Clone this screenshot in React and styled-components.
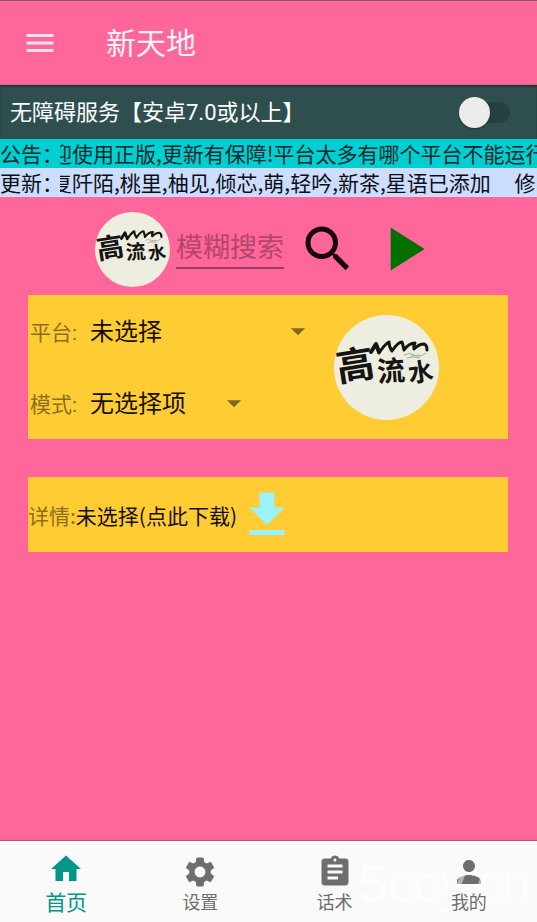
import styled, { createGlobalStyle } from 'styled-components';
import {
	MdMenu,
	MdSearch,
	MdPlayArrow,
	MdGetApp,
	MdHome,
	MdSettings,
	MdAssignment,
	MdPerson,
	MdArrowDropDown,
} from 'react-icons/md';

const GlobalStyle = createGlobalStyle`
	* {
		box-sizing: border-box;
	}
	body {
		margin: 0;
		background: #ff6699;
	}
	body, button, input, select {
		font-family: Roboto, 'Noto Sans CJK SC', sans-serif;
	}
`;

const Container = styled.div`
	min-height: 100vh;
	display: flex;
	flex-direction: column;
	overflow: hidden;
	background: #ff6699;
`;

const IconButton = styled.button`
	display: flex;
	padding: 0;
	border: 0;
	background: none;
	color: ${(props) => props.$color};
	font-size: ${(props) => props.$size}px;
	cursor: pointer;
`;

const Header = styled.header`
	height: 85px;
	padding: 0 22px;
	display: flex;
	align-items: center;
	gap: 48px;
	border-top: 1px solid #80597c;
	border-bottom: 1px solid #c96387;
`;

const Title = styled.h1`
	margin: 0;
	padding-bottom: 4px;
	font-size: 30px;
	font-weight: 400;
	color: #fff3f8;
`;

const ServiceBar = styled.label`
	height: 54px;
	padding: 0 27px 0 10px;
	display: flex;
	align-items: center;
	justify-content: space-between;
	background: #2f4f4f;
	box-shadow: inset 0 2px 2px rgba(0, 0, 0, 0.3);
	color: white;
	font-size: 22px;
`;

const ServiceName = styled.span`
	padding-bottom: 4px;
`;

const Switch = styled.input`
	appearance: none;
	width: 43px;
	height: 21px;
	margin: 0;
	display: flex;
	align-items: center;
	border-radius: 11px;
	background: #263f41;
	cursor: pointer;

	&::before {
		content: '';
		flex: none;
		width: 31px;
		height: 31px;
		margin-left: -8px;
		border-radius: 50%;
		background: #ececec;
		box-shadow: 0 1px 2px rgba(0, 0, 0, 0.4);
	}

	&:checked::before {
		margin-left: 20px;
	}
`;

const Notice = styled.div`
	height: 29px;
	display: flex;
	align-items: center;
	background: ${(props) => props.$background};
	color: ${(props) => props.$color};
	font-family: 'Noto Sans CJK SC', sans-serif;
	font-size: 21px;
	line-height: 29px;
	white-space: pre;
`;

const NoticeLabel = styled.span`
	flex: none;
	width: 60px;
	overflow: hidden;
`;

/* the ticker is stopped in the middle of its first character */
const Ticker = styled.span`
	flex: 1;
	min-width: 0;
	overflow: hidden;
	text-indent: -9px;
`;

const SearchForm = styled.form`
	height: 98px;
	padding: 6px 90px 0 95px;
	display: flex;
	align-items: center;
`;

const SearchInput = styled.input`
	flex: 1;
	min-width: 0;
	max-width: 108px;
	height: 44px;
	margin: 0 14px 4px 6px;
	padding: 4px 0 0;
	border: 0;
	border-bottom: 2px solid #993d63;
	outline: none;
	background: none;
	color: #222;
	font-size: 27px;

	&::placeholder {
		color: #b3476b;
		opacity: 1;
	}
`;

const SearchActions = styled.div`
	display: flex;
	align-items: center;
	gap: 8px;
`;

const Logo = styled.svg`
	flex: none;
	display: block;
	width: ${(props) => props.$size}px;
	height: ${(props) => props.$size}px;
`;

const Main = styled.main`
	margin: 0 29px 38px 28px;
	display: flex;
	flex-direction: column;
	gap: 38px;
`;

const Card = styled.section`
	display: flex;
	align-items: center;
	background: #ffcc33;
`;

const Fields = styled.div`
	width: 306px;
	padding-left: 2px;
`;

const Field = styled.div`
	height: 72px;
	display: flex;
	align-items: center;
`;

const FieldLabel = styled.label`
	width: 60px;
	color: #8a6e1c;
	font-size: 21px;
`;

const SelectBox = styled.div`
	width: ${(props) => props.$width}px;
	display: grid;
	align-items: center;

	> * {
		grid-area: 1 / 1;
	}

	svg {
		justify-self: end;
		color: #80661a;
		font-size: 34px;
		pointer-events: none;
	}
`;

const Select = styled.select`
	appearance: none;
	width: 100%;
	padding: 2px 0 0;
	border: 0;
	outline: none;
	background: none;
	color: #150f00;
	font-size: 24px;
`;

const DetailCard = styled(Card)`
	height: 75px;
	color: #8a6e1c;
	font-family: 'Noto Sans CJK SC', sans-serif;
	font-size: 21px;
`;

const DetailLink = styled.a`
	display: flex;
	align-items: center;
	color: #150f00;
	text-decoration: none;

	svg {
		color: #99f2ff;
		font-size: 60px;
	}
`;

const Nav = styled.nav`
	position: relative;
	height: 81px;
	margin-top: auto;
	display: grid;
	grid-template-columns: repeat(4, 1fr);
	border-top: 2px solid white;
	background: #fafafa;
	box-shadow: 0 -1px 1px rgba(0, 0, 0, 0.25);
`;

const NavItem = styled.a`
	padding: 0 2px 6px 0;
	display: flex;
	flex-direction: column;
	align-items: center;
	justify-content: flex-end;
	color: ${(props) => (props.$active ? '#009688' : '#6e6e6e')};
	font-size: ${(props) => (props.$active ? 21 : 18)}px;
	line-height: 26px;
	text-decoration: none;

	svg {
		margin-bottom: ${(props) => (props.$active ? 3 : 0)}px;
		font-size: 36px;
	}
`;

const NavLabel = styled.span`
	position: relative;
	z-index: 1;
`;

const Watermark = styled.span`
	position: absolute;
	right: 6px;
	bottom: 9px;
	color: rgba(255, 255, 255, 0.5);
	font-family: 'Liberation Sans', sans-serif;
	font-size: 52px;
	line-height: 60px;
	pointer-events: none;
`;

const BrandLogo = ({ size }) => (
	<Logo $size={size} viewBox="0 0 105 105" role="img" aria-label="高山流水">
		<circle cx="52.5" cy="52.5" r="52.5" fill="#eeeee0" />
		<g
			fill="#141412"
			fontFamily="'Noto Sans CJK SC', sans-serif"
			fontWeight="700"
		>
			<text x="2" y="64" fontSize="38" transform="rotate(-9 20 50)">
				高
			</text>
			<text x="43" y="66" fontSize="28" transform="rotate(-4 57 56)">
				流
			</text>
			<text x="74" y="66" fontSize="25" transform="rotate(-8 87 56)">
				水
			</text>
		</g>
		<g fill="none" stroke="#141412" strokeLinecap="round" strokeLinejoin="round">
			<path strokeWidth="4" d="M37 37 L42 29 L45 37" />
			<path
				strokeWidth="3"
				d="M45 38 Q51 29 55 27 Q55 32 58 36 Q64 27 68 27 Q69 30 70 35 Q75 28 81 28 Q79 31 80 34 Q85 29 90 29 Q93 30 93 35"
			/>
		</g>
		<path
			d="M70 40 q5 -3 10 0 t12 -2 M73 43 q6 -2 13 0 M77 41 l9 -1"
			fill="none"
			stroke="#aaa99f"
			strokeWidth="1"
		/>
	</Logo>
);

const navItems = [
	{ label: '首页', icon: MdHome },
	{ label: '设置', icon: MdSettings },
	{ label: '话术', icon: MdAssignment },
	{ label: '我的', icon: MdPerson },
];

const App = () => {
	return (
		<Container>
			<GlobalStyle />
			<Header>
				<IconButton $size={36} $color="#ffe0eb" aria-label="菜单">
					<MdMenu />
				</IconButton>
				<Title>新天地</Title>
			</Header>
			<ServiceBar>
				<ServiceName>无障碍服务【安卓7.0或以上】</ServiceName>
				<Switch type="checkbox" role="switch" />
			</ServiceBar>
			<Notice $background="#00ced1" $color="#06292a">
				<NoticeLabel>公告：</NoticeLabel>
				<Ticker>迎使用正版,更新有保障!平台太多有哪个平台不能运行</Ticker>
			</Notice>
			<Notice $background="#ccddff" $color="#0b0d14">
				<NoticeLabel>更新：</NoticeLabel>
				<Ticker>{'复阡陌,桃里,柚见,倾芯,萌,轻吟,新茶,星语已添加     修'}</Ticker>
			</Notice>
			<SearchForm onSubmit={(e) => e.preventDefault()}>
				<BrandLogo size={75} />
				<SearchInput type="text" placeholder="模糊搜索" aria-label="模糊搜索" />
				<SearchActions>
					<IconButton $size={60} $color="#1a0008" aria-label="搜索">
						<MdSearch />
					</IconButton>
					<IconButton type="button" $size={74} $color="#007000" aria-label="运行">
						<MdPlayArrow />
					</IconButton>
				</SearchActions>
			</SearchForm>
			<Main>
				<Card>
					<Fields>
						<Field>
							<FieldLabel htmlFor="platform">平台:</FieldLabel>
							<SelectBox $width={225}>
								<Select id="platform">
									<option>未选择</option>
								</Select>
								<MdArrowDropDown />
							</SelectBox>
						</Field>
						<Field>
							<FieldLabel htmlFor="mode">模式:</FieldLabel>
							<SelectBox $width={161}>
								<Select id="mode">
									<option>无选择项</option>
								</Select>
								<MdArrowDropDown />
							</SelectBox>
						</Field>
					</Fields>
					<BrandLogo size={105} />
				</Card>
				<DetailCard>
					详情:
					<DetailLink href="#download">
						未选择(点此下载)
						<MdGetApp />
					</DetailLink>
				</DetailCard>
			</Main>
			<Nav>
				{navItems.map(({ label, icon: Icon }, index) => (
					<NavItem key={label} href="#" $active={index === 0}>
						<Icon />
						<NavLabel>{label}</NavLabel>
					</NavItem>
				))}
				<Watermark>5ccy.cn</Watermark>
			</Nav>
		</Container>
	);
};

export default App;
